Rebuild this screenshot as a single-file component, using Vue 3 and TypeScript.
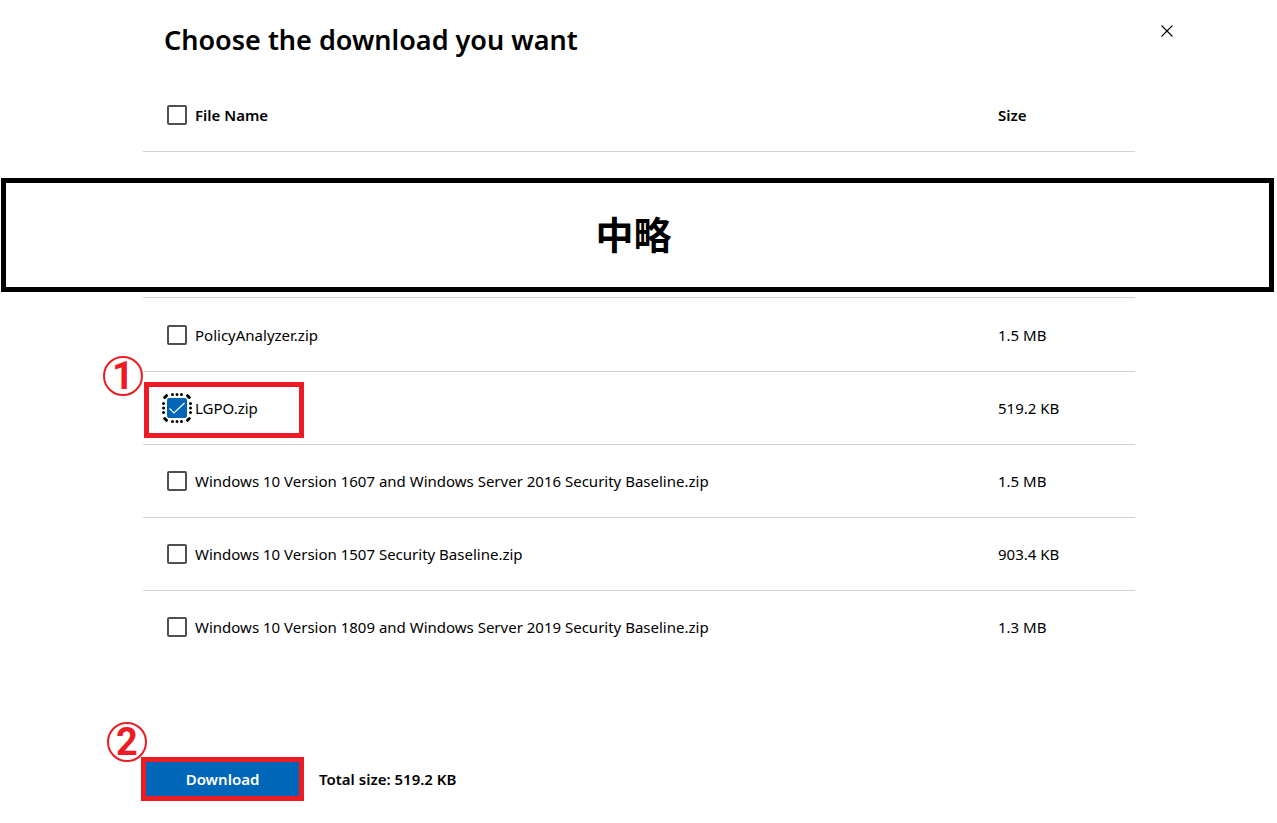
<script setup lang="ts">
import { computed, ref } from 'vue'

interface DownloadFile {
  name: string
  size: string
  kb: number
  selected: boolean
  step?: number
}

const files = ref<DownloadFile[]>([
  { name: 'PolicyAnalyzer.zip', size: '1.5 MB', kb: 1536, selected: false },
  { name: 'LGPO.zip', size: '519.2 KB', kb: 519.2, selected: true, step: 1 },
  { name: 'Windows 10 Version 1607 and Windows Server 2016 Security Baseline.zip', size: '1.5 MB', kb: 1536, selected: false },
  { name: 'Windows 10 Version 1507 Security Baseline.zip', size: '903.4 KB', kb: 903.4, selected: false },
  { name: 'Windows 10 Version 1809 and Windows Server 2019 Security Baseline.zip', size: '1.3 MB', kb: 1331.2, selected: false },
])

const allSelected = computed({
  get: () => files.value.every((file) => file.selected),
  set: (value: boolean) => files.value.forEach((file) => (file.selected = value)),
})

const totalSize = computed(() => {
  const kb = files.value.reduce((sum, file) => sum + (file.selected ? file.kb : 0), 0)
  return kb >= 1024 ? `${(kb / 1024).toFixed(1)} MB` : `${kb.toFixed(1)} KB`
})
</script>

<template>
  <main class="dialog">
    <header class="top">
      <h1>Choose the download you want</h1>
      <button class="close" type="button" aria-label="Close">
        <svg width="12" height="12" viewBox="0 0 12 12" aria-hidden="true">
          <path d="M.5.5l11 11M11.5.5l-11 11" fill="none" stroke="#000" stroke-width="1.1" />
        </svg>
      </button>
    </header>

    <table class="files">
      <thead>
        <tr>
          <th scope="col">
            <label class="pick"><input v-model="allSelected" type="checkbox" /><span>File Name</span></label>
          </th>
          <th class="size" scope="col">Size</th>
        </tr>
      </thead>
      <tbody>
        <tr class="omitted">
          <td colspan="2"><div class="band" lang="ja">中略</div></td>
        </tr>
        <tr v-for="file in files" :key="file.name">
          <td>
            <label class="pick"><input v-model="file.selected" type="checkbox" /><span>{{ file.name }}</span></label>
            <div v-if="file.step" class="marker"><span class="step">{{ file.step }}</span></div>
          </td>
          <td class="size">{{ file.size }}</td>
        </tr>
      </tbody>
    </table>

    <footer class="actions">
      <div class="frame">
        <span class="step">2</span>
        <button class="download" type="button">Download</button>
      </div>
      <p>Total size: {{ totalSize }}</p>
    </footer>
  </main>
</template>

<style>
body {
  margin: 0;
  background: #fff;
}
</style>

<style scoped>
.dialog {
  position: relative;
  box-sizing: border-box;
  padding: 20px 142px 22px 143px;
  color: #000;
  font: 15px/20px "Segoe UI", "Noto Sans", "Open Sans", sans-serif;
}

.top {
  display: flex;
  justify-content: space-between;
  align-items: flex-start;
  height: 59px;
  margin-right: -48px;
  padding-left: 21px;
}

h1 {
  margin: 0;
  font-size: 27px;
  line-height: 40px;
  font-weight: 600;
}

.close {
  display: grid;
  place-items: center;
  width: 32px;
  height: 22px;
  padding: 0;
  border: 0;
  background: none;
}

.files {
  width: 100%;
  border-collapse: separate;
  border-spacing: 0;
}

th,
td {
  position: relative;
  box-sizing: border-box;
  height: 73px;
  padding: 0 24px;
  border-bottom: 1px solid #d2d2d2;
  text-align: left;
}

th {
  font-weight: 600;
}

.omitted + tr td {
  height: 74px;
}

tbody tr:last-child td {
  border-bottom-color: transparent;
}

.files .size {
  width: 161px;
}

.files .omitted td {
  position: static;
  height: 146px;
  padding: 0;
  vertical-align: top;
}

.band {
  position: absolute;
  left: 1px;
  right: 3px;
  box-sizing: border-box;
  height: 114px;
  margin-top: 26px;
  padding-right: 8px;
  border: 5px solid #000;
  background: #fff;
  font: 700 38px/100px "Noto Sans CJK JP", sans-serif;
  text-align: center;
}

.pick {
  display: flex;
  align-items: center;
  gap: 8px;
}

input {
  appearance: none;
  position: relative;
  flex: none;
  box-sizing: border-box;
  width: 20px;
  height: 20px;
  margin: 0;
  border: 2px solid #505050;
  border-radius: 2px;
  background: #fff;
}

input:checked {
  border-color: #0067b8;
  background: #0067b8 url("data:image/svg+xml,%3Csvg xmlns='http://www.w3.org/2000/svg' viewBox='0 0 16 16'%3E%3Cpath d='M.5 8.5l4.5 4.5L15.500 3' fill='none' stroke='white' stroke-width='1.2'/%3E%3C/svg%3E") center / 16px no-repeat;
}

input:checked::before {
  content: "";
  position: absolute;
  inset: -8px;
  background: url("data:image/svg+xml,%3Csvg xmlns='http://www.w3.org/2000/svg' viewBox='0 0 32 32'%3E%3Cpath d='M3.700 5.500L5.500 3.700M11.500 2.500h0M16 2.500h0M20.500 2.500h0M26.500 3.700L28.300 5.500M29.500 11.500h0M29.500 16h0M29.500 20.500h0M28.300 26.500L26.500 28.300M20.500 29.500h0M16 29.500h0M11.500 29.500h0M5.500 28.300L3.700 26.500M2.500 20.500h0M2.500 16h0M2.500 11.500h0' fill='none' stroke='black' stroke-width='3' stroke-linecap='round'/%3E%3C/svg%3E") center / 32px no-repeat;
}

.marker {
  position: absolute;
  top: 10px;
  left: 1px;
  box-sizing: border-box;
  width: 160px;
  height: 56px;
  border: 5px solid #ed1c24;
  pointer-events: none;
}

.step {
  position: absolute;
  left: -46px;
  top: -31px;
  box-sizing: border-box;
  width: 40px;
  height: 40px;
  border: 2px solid #ed1c24;
  border-radius: 50%;
  color: #ed1c24;
  font: 700 38px/36px Roboto, "Liberation Sans", sans-serif;
  text-align: center;
}

.frame .step {
  left: -39px;
  top: -40px;
}

.actions {
  display: flex;
  align-items: center;
  gap: 15px;
  margin: 93px 0 0 -2px;
}

.frame {
  position: relative;
  box-sizing: border-box;
  width: 163px;
  height: 44px;
  border: 5px solid #ed1c24;
}

.download {
  display: block;
  width: 100%;
  height: 100%;
  padding: 0;
  border: 0;
  background: #0067b8;
  color: #fff;
  font: inherit;
  font-weight: 600;
}

.actions p {
  margin: 0;
  font-weight: 600;
}
</style>
